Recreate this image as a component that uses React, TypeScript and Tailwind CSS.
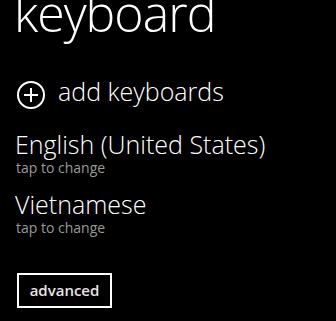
import React from 'react';

const PlusCircle: React.FC = () => (
    <svg width="28" height="28" viewBox="0 0 28 28" fill="none" stroke="white" strokeWidth="2">
        <circle cx="14" cy="14" r="13" />
        <path d="M14 7v14M7 14h14" />
    </svg>
);

const KeyboardRow: React.FC<{ name: string }> = ({ name }) => (
    <div className="flex flex-col">
        <span className="text-[25px] leading-[28px] font-light text-white pl-[1px]">{name}</span>
        <span className="mt-[2px] text-[14px] leading-[16px] text-[#9a9a9a] pl-[2px]">tap to change</span>
    </div>
);

export default function App() {
    return (
        <div
            className="w-[336px] h-[321px] bg-black overflow-hidden text-white"
            style={{ fontFamily: '"Open Sans", "Noto Sans", sans-serif' }}
        >
            <div className="pl-[14px]">
                {/* Page title, cut at the top */}
                <h1 className="text-[50px] leading-[50px] font-light tracking-[-1px] -mt-[12px]">keyboard</h1>

                {/* Add keyboards */}
                <div className="flex items-start gap-[13px] mt-[39px] pl-[3px]">
                    <div className="mt-[4px]">
                        <PlusCircle />
                    </div>
                    <span className="text-[25px] leading-[28px] font-light">add keyboards</span>
                </div>

                {/* Keyboard list */}
                <div className="flex flex-col gap-[14px] mt-[21px]">
                    <KeyboardRow name="English (United States)" />
                    <KeyboardRow name="Vietnamese" />
                </div>

                {/* Advanced button */}
                <button className="mt-[37px] ml-[3px] w-[95px] h-[35px] border-2 border-white text-[15px] font-semibold text-[#e6e6e6] flex items-center justify-center">
                    advanced
                </button>
            </div>
        </div>
    );
}
